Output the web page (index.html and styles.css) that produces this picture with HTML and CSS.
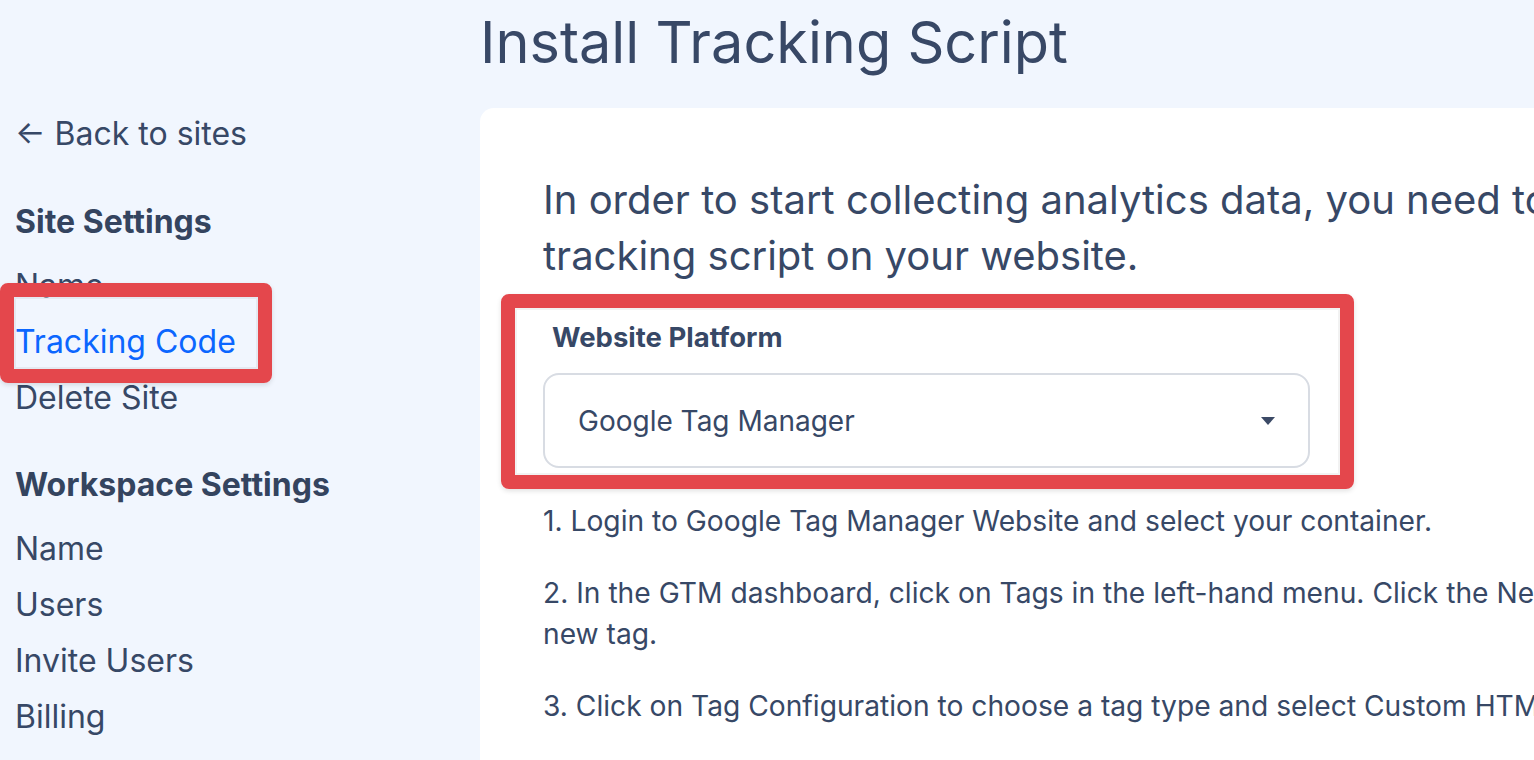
FILE: index.html
```html
<!DOCTYPE html>
<html lang="en">
<head>
<meta charset="utf-8">
<title>Install Tracking Script</title>
<link rel="stylesheet" href="styles.css">
</head>
<body>
<div class="page">
  <header class="top">
    <div class="top-spacer"></div>
    <h1 class="title">Install Tracking Script</h1>
  </header>
  <div class="layout">
    <nav class="sidebar">
      <a class="back" href="#">← Back to sites</a>
      <section class="nav-section">
        <h2 class="nav-heading">Site Settings</h2>
        <ul class="nav-list">
          <li><a href="#">Name</a></li>
          <li class="annot-wrap"><a href="#" class="active">Tracking Code</a><span class="annot annot-nav"></span></li>
          <li><a href="#">Delete Site</a></li>
        </ul>
      </section>
      <section class="nav-section">
        <h2 class="nav-heading">Workspace Settings</h2>
        <ul class="nav-list">
          <li><a href="#">Name</a></li>
          <li><a href="#">Users</a></li>
          <li><a href="#">Invite Users</a></li>
          <li><a href="#">Billing</a></li>
          <li><a href="#">Delete Workspace</a></li>
        </ul>
      </section>
    </nav>
    <main class="card">
      <div class="content">
        <p class="intro">In order to start collecting analytics data, you need to install the tracking script on your website.</p>
        <div class="field annot-wrap">
          <label class="field-label">Website Platform</label>
          <div class="select">
            <span class="select-value">Google Tag Manager</span>
            <svg class="caret" width="14" height="8" viewBox="0 0 14 8"><path d="M0 0H14L7 8Z" fill="#3b4a66"/></svg>
          </div>
          <span class="annot annot-field"></span>
        </div>
        <ol class="steps">
          <li>1. Login to Google Tag Manager Website and select your container.</li>
          <li>2. In the GTM dashboard, click on Tags in the left-hand menu. Click the New button to create a new tag.</li>
          <li>3. Click on Tag Configuration to choose a tag type and select Custom HTML.</li>
        </ol>
      </div>
    </main>
  </div>
</div>
</body>
</html>
```
FILE: styles.css
```css
* { box-sizing: border-box; }
html, body { margin: 0; padding: 0; }
body {
  background: #f1f6fe;
  font-family: Inter, "Noto Sans", sans-serif;
  color: #374866;
  overflow: hidden;
  height: 760px;
}
.page { width: 1534px; }
.top {
  display: grid;
  grid-template-columns: 480px 1fr;
}
.title {
  margin: 0;
  padding-top: 4px;
  font-size: 57.6px;
  font-weight: 400;
  line-height: 76px;
  color: #384866;
}
.layout {
  display: grid;
  grid-template-columns: 480px 1fr;
  margin-top: 28px;
}
.sidebar {
  padding-left: 15px;
  padding-top: 1px;
}
.sidebar a { color: #374866; text-decoration: none; }
.back {
  display: block;
  font-size: 32px;
  line-height: 50px;
}
.nav-section { margin-top: 38px; }
.nav-section + .nav-section { margin-top: 34px; }
.nav-heading {
  margin: 0;
  font-size: 32px;
  font-weight: 700;
  line-height: 50px;
  color: #34445f;
}
.nav-list {
  list-style: none;
  margin: 11px 0 0;
  padding: 0;
}
.nav-list li {
  font-size: 32px;
  line-height: 56px;
}
.nav-list a.active { color: #0b66ff; }
.annot-wrap { position: relative; }
.annot {
  position: absolute;
  border: 14px solid #e4474c;
  border-radius: 8px;
  pointer-events: none;
  box-shadow: 0 2px 5px rgba(0, 0, 0, 0.12), inset 0 0 0 2px rgba(0, 0, 0, 0.05);
}
.annot-nav {
  left: -15px;
  top: -31px;
  width: 272px;
  height: 100px;
}
.card {
  background: #fff;
  border-top-left-radius: 14px;
  min-height: 700px;
  padding: 64px 0 0 63px;
}
.content { width: 1280px; }
.intro {
  margin: 0;
  font-size: 40px;
  line-height: 56px;
  color: #374866;
}
.field {
  margin-top: 33px;
  width: 767px;
}
.field-label {
  display: block;
  margin-left: 9px;
  font-size: 27.5px;
  font-weight: 700;
  line-height: 40px;
  color: #374866;
}
.select {
  margin-top: 16px;
  height: 95px;
  border: 2px solid #d8dce3;
  border-radius: 16px;
  display: flex;
  align-items: center;
  justify-content: space-between;
  padding: 0 33px;
}
.select-value { font-size: 28px; color: #374866; }
.caret { display: block; }
.annot-field {
  left: -42px;
  top: -23px;
  width: 853px;
  height: 195px;
}
.steps {
  list-style: none;
  margin: 33px 0 0;
  padding: 0;
}
.steps li {
  font-size: 28.2px;
  line-height: 41px;
  margin-bottom: 31px;
}
```
